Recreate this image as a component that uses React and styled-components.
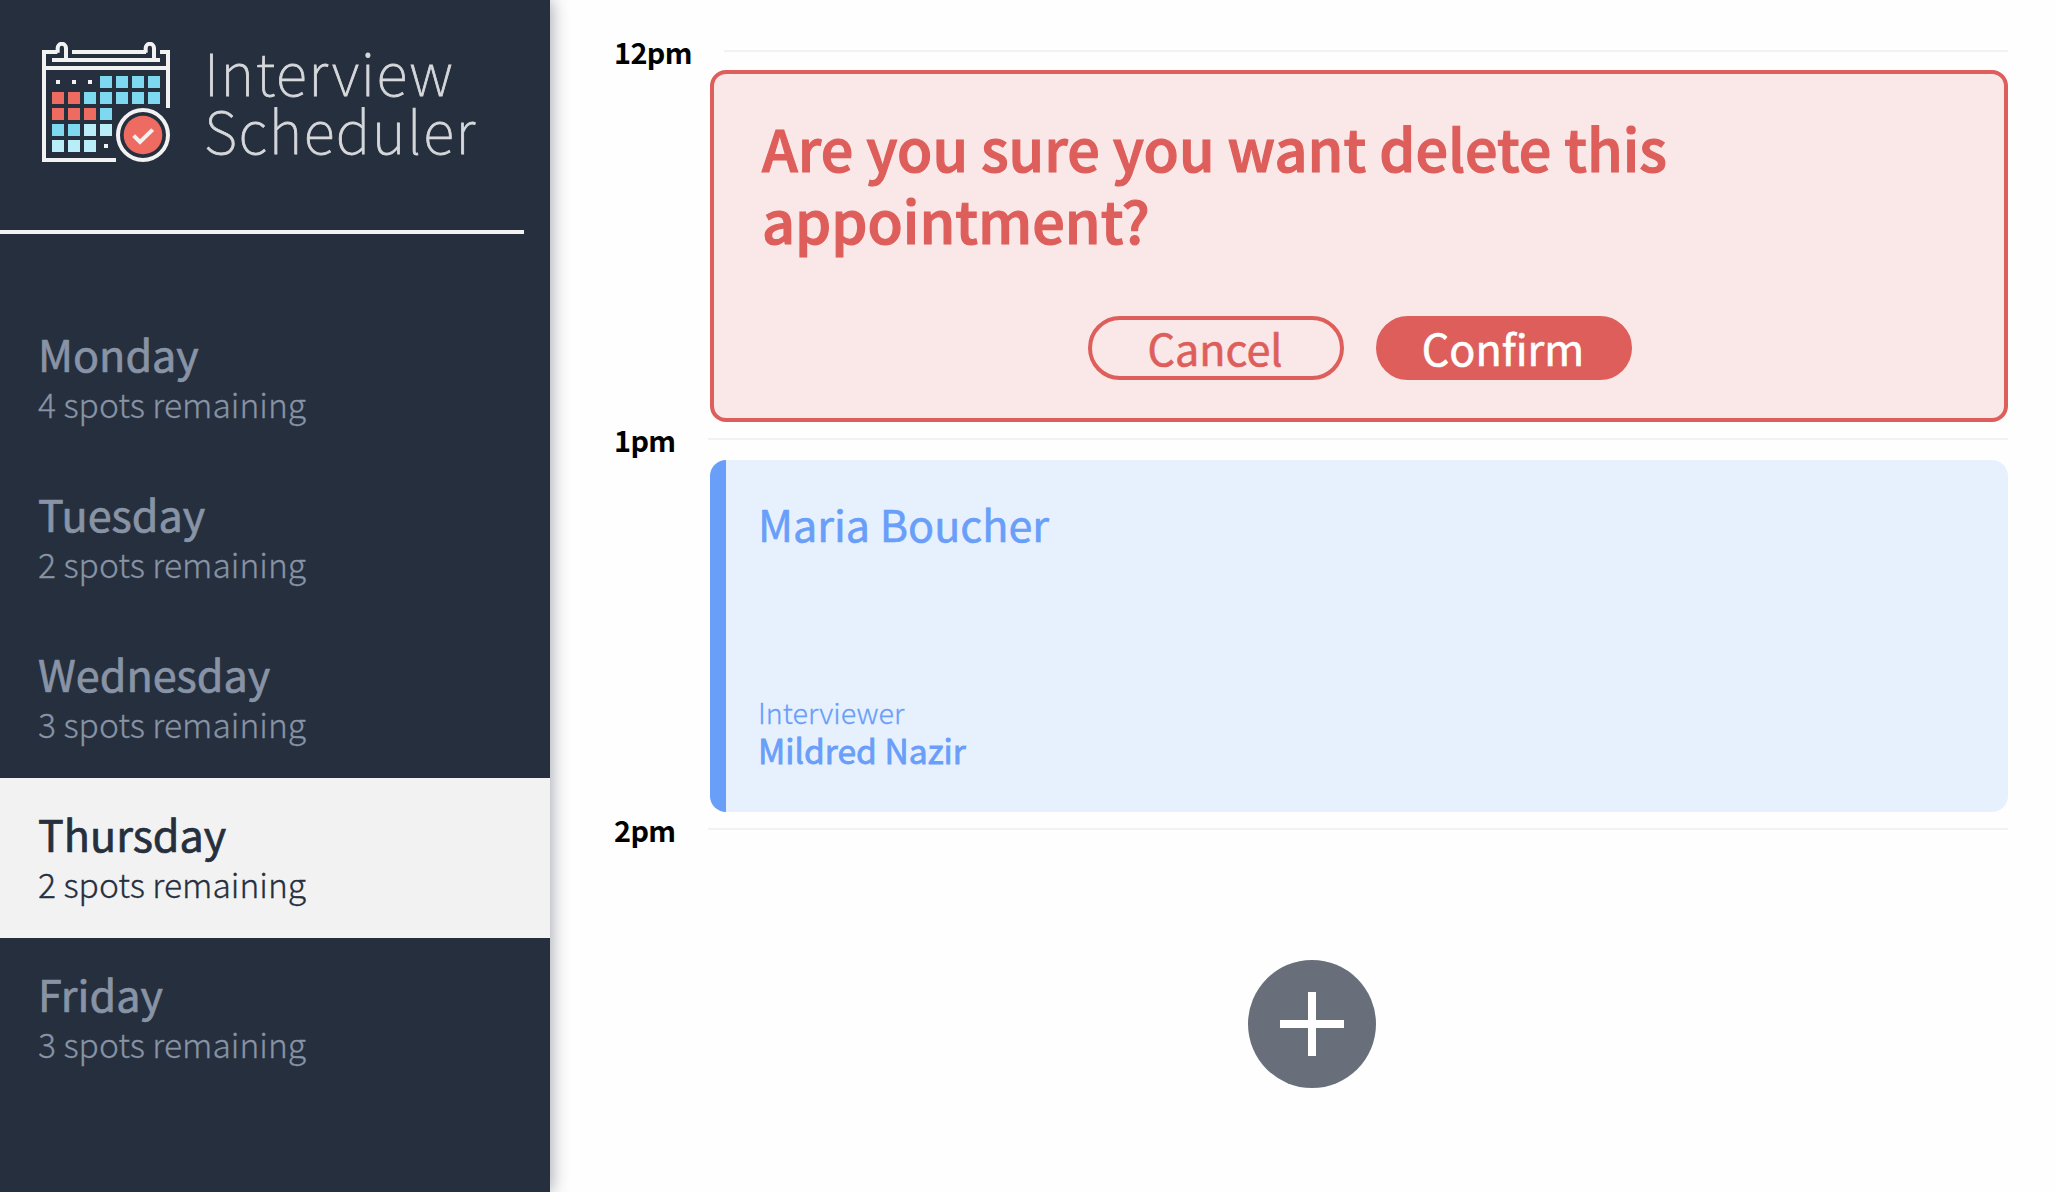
import React from "react";
import styled, { createGlobalStyle } from "styled-components";

const GlobalStyle = createGlobalStyle`
  *, *::before, *::after { box-sizing: border-box; }
  body {
    margin: 0;
    background: #fefefe;
    font-family: "Noto Sans CJK SC", "Noto Sans", sans-serif;
    overflow: hidden;
  }
`;

const Layout = styled.main`
  display: flex;
  width: 2056px;
  height: 1192px;
  overflow: hidden;
`;

const Sidebar = styled.aside`
  flex: 0 0 550px;
  display: flex;
  flex-direction: column;
  background: #252f3d;
  box-shadow: 2px 0 16px rgba(34, 42, 62, 0.4);
  z-index: 1;
`;

const Brand = styled.header`
  display: flex;
  align-items: flex-start;
  height: 230px;
  padding: 42px 0 0 42px;
  gap: 34px;
`;

const BrandName = styled.div`
  font-size: 58px;
  font-weight: 100;
  line-height: 58px;
  letter-spacing: 1.6px;
  color: #d6d8db;
  -webkit-text-stroke: 0.8px #d6d8db;
`;

const BrandLine = styled.div`
  white-space: nowrap;
`;

const Separator = styled.hr`
  width: 524px;
  height: 4px;
  margin: 0 0 64px;
  border: 0;
  background: #f2f2f2;
`;

const DayList = styled.ul`
  margin: 0;
  padding: 0;
  list-style: none;
`;

const DayItem = styled.li`
  height: 160px;
  padding: 28px 38px 0;
  white-space: nowrap;
  color: ${(p) => (p.$selected ? "#252f3d" : "#8893a5")};
  background: ${(p) => (p.$selected ? "#f2f2f2" : "transparent")};
`;

const DayName = styled.h2`
  margin: 0;
  font-size: 43.1px;
  line-height: 54px;
  font-weight: 400;
  -webkit-text-stroke: 0.7px currentColor;
`;

const DaySpots = styled.h3`
  margin: 0;
  font-size: 33.6px;
  line-height: 48px;
  font-weight: 300;
  -webkit-text-stroke: 0.3px currentColor;
`;

const Schedule = styled.section`
  flex: 1;
  display: flex;
  flex-direction: column;
  padding: 32px 48px 0 64px;
`;

const Slot = styled.article`
  flex: 0 0 ${(p) => p.$height}px;
  min-height: 0;
  display: flex;
  flex-direction: column;
`;

const SlotHeader = styled.header`
  flex: 0 0 ${(p) => p.$height}px;
  min-height: 0;
  display: flex;
  align-items: flex-start;
  justify-content: space-between;
`;

const Time = styled.h4`
  margin: 0;
  font-size: 28.8px;
  line-height: 40px;
  font-weight: 700;
  letter-spacing: -0.6px;
  color: #000;
`;

const Rule = styled.div`
  width: ${(p) => p.$width}px;
  height: 2px;
  margin-top: 18px;
  background: #f2f2f2;
`;

const Card = styled.div`
  flex: 0 0 352px;
  display: flex;
  flex-direction: column;
  justify-content: space-between;
  margin-left: 96px;
  border-radius: 16px;
`;

const ConfirmCard = styled(Card)`
  padding: 37px 46px 38px 48px;
  border: 4px solid #dd5e5a;
  background: #fae7e7;
`;

const Question = styled.h1`
  width: 1000px;
  margin: 0;
  font-size: 57.5px;
  line-height: 72px;
  font-weight: 500;
  color: #dd5e5a;
  -webkit-text-stroke: 1.2px #dd5e5a;
`;

const Actions = styled.div`
  display: flex;
  justify-content: center;
  gap: 32px;
`;

const Button = styled.button`
  width: 256px;
  height: 64px;
  padding: 0 2px 2px 0;
  border: 4px solid #dd5e5a;
  border-radius: 32px;
  font-family: inherit;
  font-size: 43.1px;
  line-height: 54px;
  font-weight: 400;
  color: ${(p) => (p.$filled ? "#fff" : "#dd5e5a")};
  background: ${(p) => (p.$filled ? "#dd5e5a" : "transparent")};
  -webkit-text-stroke: 0.6px currentColor;
`;

const BookedCard = styled(Card)`
  padding: 36px 32px 43px;
  border-left: 16px solid #699ef9;
  background: #e7f1fe;
  color: #699ef9;
`;

const Student = styled.h2`
  margin: 0;
  font-size: 43.1px;
  line-height: 54px;
  font-weight: 400;
  -webkit-text-stroke: 0.6px currentColor;
`;

const InterviewerLabel = styled.h4`
  margin: 0;
  font-size: 28.7px;
  line-height: 38px;
  font-weight: 300;
  -webkit-text-stroke: 0.3px currentColor;
`;

const InterviewerName = styled.h3`
  margin: 0;
  font-size: 33.6px;
  line-height: 38px;
  font-weight: 400;
  -webkit-text-stroke: 0.8px currentColor;
`;

const EmptySlot = styled.div`
  display: flex;
  justify-content: center;
  padding: 108px 0 0 2px;
`;

const AddButton = styled.button`
  width: 128px;
  height: 128px;
  padding: 0;
  border: 0;
  border-radius: 50%;
  background: #686f7a;

  svg { display: block; }
`;

const days = [
  { name: "Monday", spots: 4 },
  { name: "Tuesday", spots: 2 },
  { name: "Wednesday", spots: 3 },
  { name: "Thursday", spots: 2, selected: true },
  { name: "Friday", spots: 3 },
];

const RED = "#ed6b61";
const BLUE = "#7ed8ef";
const PALE = "#b9eef9";
const calendarRows = [
  [null, null, null, BLUE, BLUE, BLUE, BLUE],
  [RED, RED, BLUE, BLUE, BLUE, BLUE, BLUE],
  [RED, RED, RED, BLUE],
  [BLUE, BLUE, PALE, PALE],
  [PALE, PALE, PALE, null],
];

function CalendarLogo() {
  return (
    <svg width="128" height="120" viewBox="66 66 384 360" fill="none">
      <g fill="#f2f2f2">
        <path d="M66 90H112V102H78V138H438V102H420V90H450V264H438V150H78V414H288V426H66Z" />
        <rect x="156" y="90" width="222" height="12" />
        <rect x="96" y="114" width="324" height="12" />
      </g>
      <path
        d="M113 98V84a12.500 12.500 0 0 1 25 0V118M377 98V84a12.500 12.500 0 0 1 25 0V118"
        stroke="#f2f2f2"
        strokeWidth="12"
      />
      {calendarRows.map((row, r) =>
        row.map((color, c) =>
          color ? (
            <rect key={`${r}-${c}`} x={96 + c * 48} y={168 + r * 48} width="36" height="36" fill={color} />
          ) : (
            <rect key={`${r}-${c}`} x={108 + c * 48} y={180 + r * 48} width="12" height="12" fill="#f2f2f2" />
          )
        )
      )}
      <circle cx="369" cy="345" r="75" stroke="#f2f2f2" strokeWidth="12" />
      <circle cx="369" cy="345" r="58" fill={RED} />
      <path d="M341 347L360 366L398 329" stroke="#f2f2f2" strokeWidth="12" />
    </svg>
  );
}

export default function App() {
  return (
    <>
      <GlobalStyle />
      <Layout>
        <Sidebar>
          <Brand>
            <CalendarLogo />
            <BrandName>
              <BrandLine>Interview</BrandLine>
              <BrandLine>Scheduler</BrandLine>
            </BrandName>
          </Brand>
          <Separator />
          <DayList>
            {days.map((day) => (
              <DayItem key={day.name} $selected={day.selected}>
                <DayName>{day.name}</DayName>
                <DaySpots>{day.spots} spots remaining</DaySpots>
              </DayItem>
            ))}
          </DayList>
        </Sidebar>
        <Schedule>
          <Slot $height={388}>
            <SlotHeader $height={38}>
              <Time>12pm</Time>
              <Rule $width={1284} />
            </SlotHeader>
            <ConfirmCard>
              <Question>Are you sure you want delete this appointment?</Question>
              <Actions>
                <Button>Cancel</Button>
                <Button $filled>Confirm</Button>
              </Actions>
            </ConfirmCard>
          </Slot>
          <Slot $height={390}>
            <SlotHeader $height={40}>
              <Time>1pm</Time>
              <Rule $width={1300} />
            </SlotHeader>
            <BookedCard>
              <Student>Maria Boucher</Student>
              <div>
                <InterviewerLabel>Interviewer</InterviewerLabel>
                <InterviewerName>Mildred Nazir</InterviewerName>
              </div>
            </BookedCard>
          </Slot>
          <Slot $height={382}>
            <SlotHeader $height={42}>
              <Time>2pm</Time>
              <Rule $width={1300} />
            </SlotHeader>
            <EmptySlot>
              <AddButton aria-label="Add">
                <svg width="128" height="128" viewBox="0 0 128 128">
                  <path d="M64 32V96M32 64H96" stroke="#fff" strokeWidth="8" />
                </svg>
              </AddButton>
            </EmptySlot>
          </Slot>
        </Schedule>
      </Layout>
    </>
  );
}
